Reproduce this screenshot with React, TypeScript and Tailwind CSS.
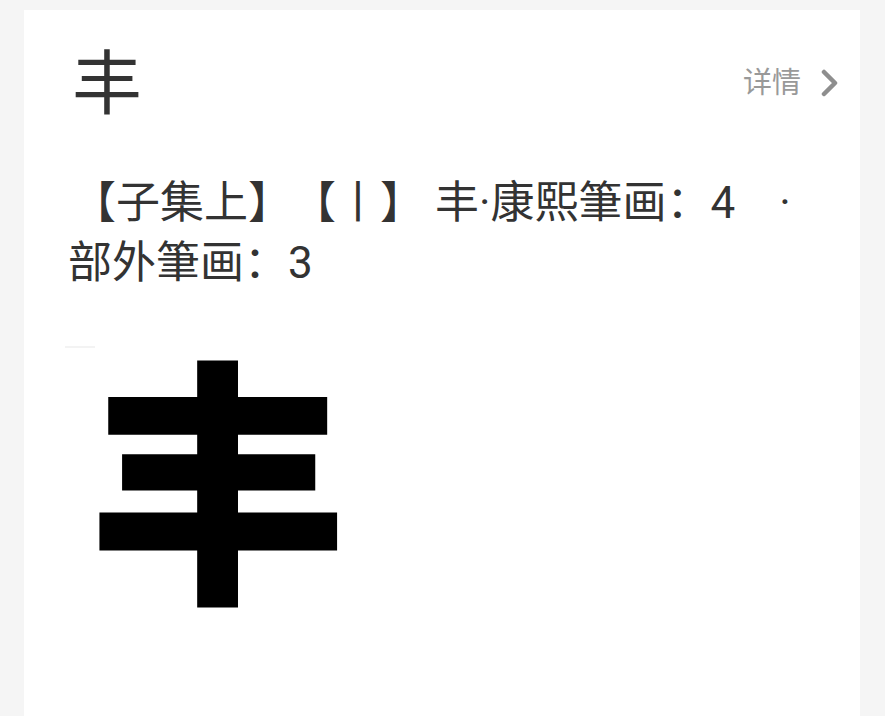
import React from "react";

const font = "font-['Roboto','Noto_Sans_CJK_SC',sans-serif]";

function Chevron() {
  return (
    <svg width="20" height="28" viewBox="0 0 20 28" className="ml-[19px]">
      <polyline points="4,3 15,14 4,25" fill="none" stroke="#8e8e8e" strokeWidth="4.5" strokeLinecap="round" strokeLinejoin="round" />
    </svg>
  );
}

export default function App() {
  return (
    <div className={`min-h-screen bg-[#f5f5f5] pl-[24px] pr-[25px] pt-[10px] ${font} [text-spacing-trim:space-all]`}>
      <div className="bg-white h-[706px] pl-[46px] pr-[20px] pt-[40px] overflow-hidden">
        <div className="flex items-center justify-between">
          <div className="text-[70px] leading-none text-[#333333] ml-[2px]">丰</div>
          <div className="flex items-center mb-[4px]">
            <span className="text-[29px] leading-none text-[#999999]">详情</span>
            <Chevron />
          </div>
        </div>

        <div className="mt-[53px] text-[44px] leading-[60px] text-[#333333] -ml-[2px]">
          <div className="whitespace-nowrap">
            <span className="ml-[4px]">【</span>子集上】【丨】 丰·康熙筆画：4<span className="ml-[44px]">·</span>
          </div>
          <div className="whitespace-nowrap">部外筆画：3</div>
        </div>

        <div className="relative mt-[71px]">
          <div className="absolute left-[-5px] top-[-18px] w-[30px] h-[2px] bg-[#f3f3f3]" />
          <div className="ml-[18px] text-[260px] leading-none font-black text-black">丰</div>
        </div>
      </div>
    </div>
  );
}
